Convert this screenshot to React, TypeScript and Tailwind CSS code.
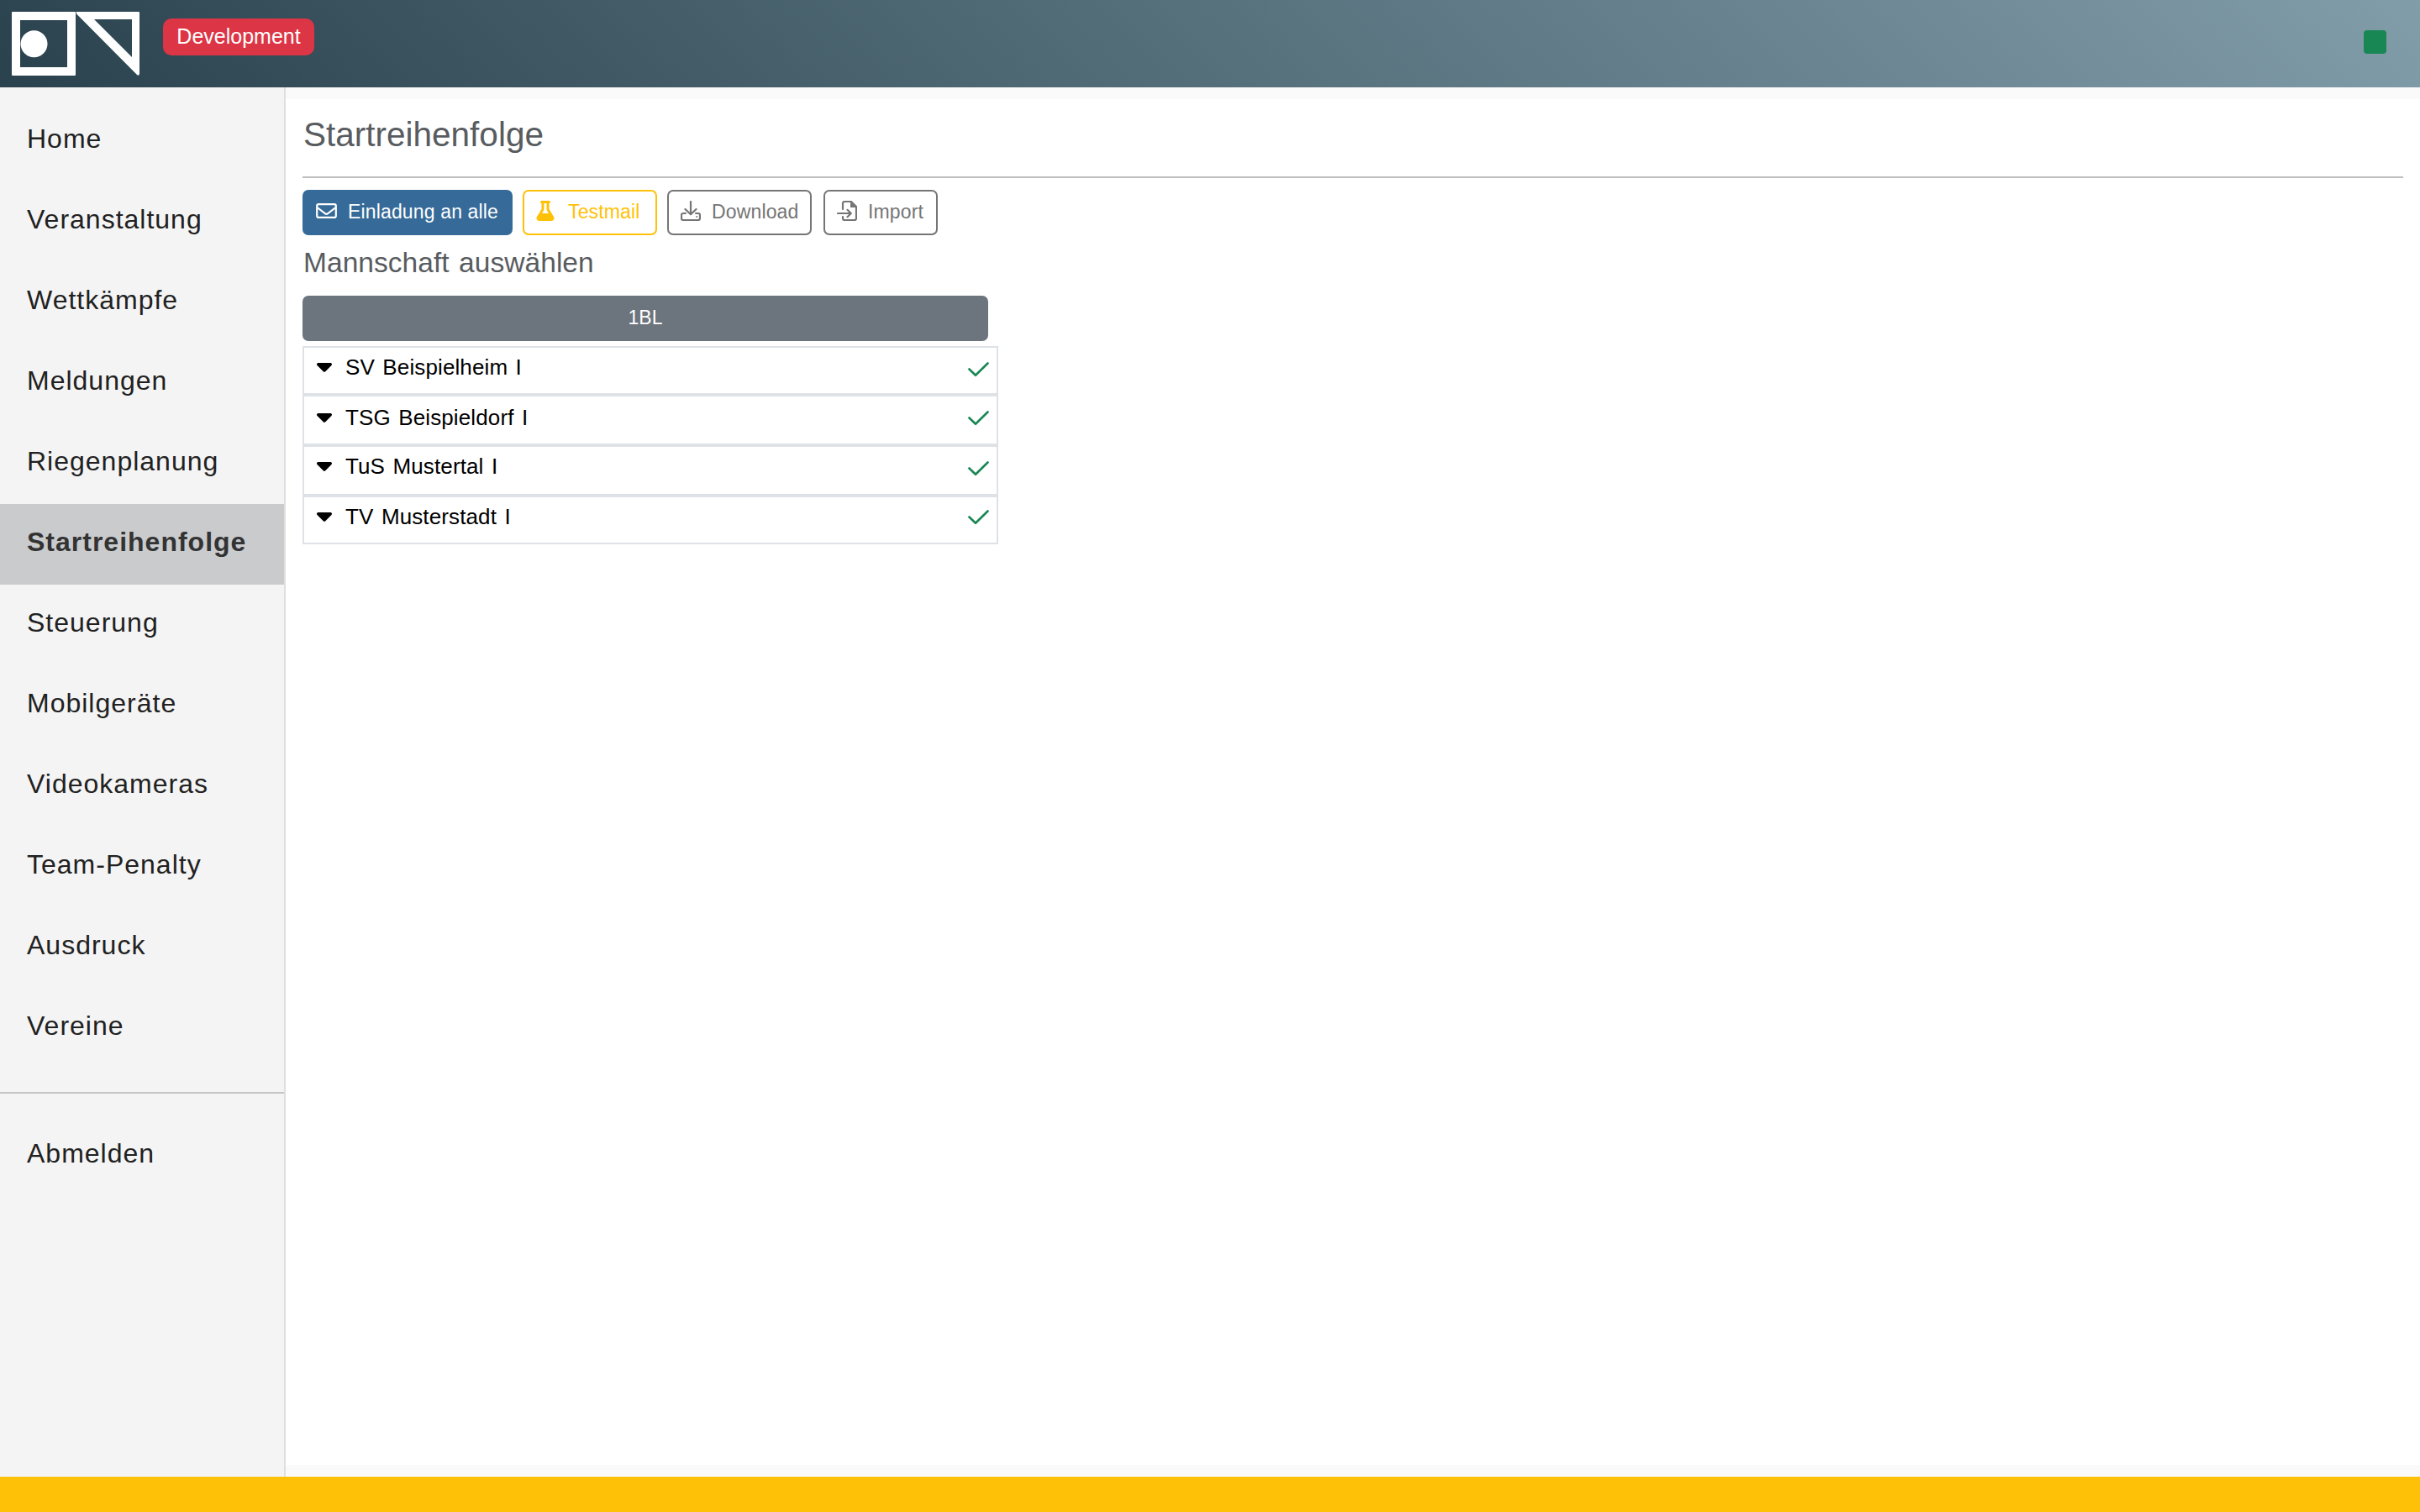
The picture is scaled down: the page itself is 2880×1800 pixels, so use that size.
import type { ReactNode } from "react";
import { FaCaretDown, FaFlask } from "react-icons/fa6";

const menuItems = [
  "Home",
  "Veranstaltung",
  "Wettkämpfe",
  "Meldungen",
  "Riegenplanung",
  "Startreihenfolge",
  "Steuerung",
  "Mobilgeräte",
  "Videokameras",
  "Team-Penalty",
  "Ausdruck",
  "Vereine",
];

const teams = [
  { name: "SV Beispielheim I", row: "h-[58px]", label: "pt-0", check: "pt-[5px]" },
  { name: "TSG Beispieldorf I", row: "h-[60px]", label: "pt-1", check: "pt-[5px]" },
  { name: "TuS Mustertal I", row: "h-[60px]", label: "pt-0", check: "pt-[5px]" },
  { name: "TV Musterstadt I", row: "h-[58px]", label: "pt-0", check: "pt-[3px]" },
];

function Logo() {
  return (
    <svg width="152" height="76" viewBox="0 0 152 76" fill="none" stroke="white">
      <path d="M1 0H75a1 1 0 0 1 1 1V75a1 1 0 0 1-1 1H1a1 1 0 0 1-1-1V1a1 1 0 0 1 1-1ZM10 10V66H66V10Z" fill="white" fillRule="evenodd" stroke="none" />
      <circle cx="26.5" cy="38.3" r="16" fill="white" stroke="none" />
      <path
        d="M77 0H151a1 1 0 0 1 1 1V74q-1 3-3 1L77.500 3Q76 1 77 0ZM98 9L143 54V9Z"
        fill="white"
        fillRule="evenodd"
        stroke="none"
      />
    </svg>
  );
}

function EnvelopeIcon() {
  return (
    <svg width="25" height="18" viewBox="0 0 25 18" fill="none" stroke="currentColor" strokeWidth="2.200" strokeLinejoin="round">
      <rect x="1.200" y="1.100" width="22.600" height="15.800" rx="2" />
      <path d="M1.500 5L10.800 12.200Q12.500 13.500 14.200 12.200L23.500 5" />
    </svg>
  );
}

function DownloadIcon() {
  return (
    <svg width="24" height="24" viewBox="0 0 24 24" fill="none" stroke="currentColor" strokeWidth="2.200" strokeLinecap="round" strokeLinejoin="round">
      <path d="M12 1V16M5.500 10L12 16.200L18.500 10" />
      <path d="M6 15H3a2 2 0 0 0-2 2V21a2 2 0 0 0 2 2H21a2 2 0 0 0 2-2V17a2 2 0 0 0-2-2H18" />
      <circle cx="19.200" cy="19" r="1" fill="currentColor" stroke="none" />
    </svg>
  );
}

function ImportIcon() {
  return (
    <svg width="24" height="24" viewBox="0 0 24 24" fill="none" stroke="currentColor" strokeWidth="2.200" strokeLinecap="round" strokeLinejoin="round">
      <path d="M7 10V3a2 2 0 0 1 2-2H17L23 7V21a2 2 0 0 1-2 2H9a2 2 0 0 1-2-2V19" />
      <path d="M16 1V8H23Z" fill="currentColor" stroke="none" />
      <path d="M1 15H16.500M12.500 10.800L16.800 15L12.500 19.200" />
    </svg>
  );
}

function CheckIcon() {
  return (
    <svg width="25" height="18" viewBox="0 0 25 18" fill="none" stroke="currentColor" strokeWidth="2.600" strokeLinecap="round" strokeLinejoin="round">
      <path d="M1.500 8.500L9 15.800L23.500 1.500" />
    </svg>
  );
}

function ToolbarButton({ className, icon, children }: { className: string; icon: ReactNode; children: ReactNode }) {
  return (
    <button className={`flex h-[54px] shrink-0 items-center rounded-[7px] border-2 pb-0.5 pl-[14px] text-[23px] tracking-[0.15px] ${className}`}>
      <span className="mr-[13px] mb-0.5">{icon}</span>
      <span className="whitespace-nowrap">{children}</span>
    </button>
  );
}

export default function App() {
  return (
    <div className="flex h-[1800px] w-[2880px] flex-col overflow-hidden bg-[#fafafa] font-['Liberation_Sans',sans-serif] [word-spacing:0.13em]">
      <header className="flex h-[104px] shrink-0 items-start bg-[linear-gradient(45deg,#2a424e,#819da9)]">
        <div className="pt-[14px] pl-[14px]">
          <Logo />
        </div>
        <span className="mt-[22px] ml-[28px] flex h-[44px] w-[180px] items-center justify-center rounded-[10px] bg-[#dc3545] pb-px text-[25px] text-white">
          Development
        </span>
        <span className="mt-[36px] mr-[40px] ml-auto h-[28px] w-[27px] rounded-[4px] bg-[#198754]" />
      </header>

      <div className="flex min-h-0 flex-1">
        <nav className="w-[340px] shrink-0 border-r-2 border-[#dfdfdf] bg-[#f4f4f4] pt-4 text-[32px] tracking-[1px] text-[#212121]">
          {menuItems.map((item) => (
            <div
              key={item}
              className={
                item === "Startreihenfolge"
                  ? "flex h-24 items-center bg-[#cacbcd] pb-1.5 pl-8 font-bold text-[#333]"
                  : "flex h-24 items-center pb-1.5 pl-8"
              }
            >
              {item}
            </div>
          ))}
          <hr className="mt-7 mb-6 border-t-2 border-[#c6c6c6]" />
          <div className="flex h-24 items-center pb-0.5 pl-8">Abmelden</div>
        </nav>

        <main className="my-[14px] flex-1 bg-white px-5">
          <h1 className="flex h-[92px] items-center pb-[8px] pl-px text-[40.500px] text-[#585c60]">
            Startreihenfolge
          </h1>
          <hr className="border-t-2 border-[#bdbdbd]" />

          <div className="mt-[14px] flex">
            <ToolbarButton className="w-[250px] border-[#366a98] bg-[#366a98] text-white" icon={<EnvelopeIcon />}>
              Einladung an alle
            </ToolbarButton>
            <ToolbarButton className="ml-3 w-[160px] border-[#ffc107] tracking-[0.5px] text-[#ffc107]" icon={<FaFlask className="-ml-px mr-0.5" size={24} />}>
              Testmail
            </ToolbarButton>
            <ToolbarButton className="ml-3 w-[172px] border-[#757575] text-[#757575]" icon={<DownloadIcon />}>
              Download
            </ToolbarButton>
            <ToolbarButton className="ml-[14px] w-[136px] border-[#757575] text-[#757575]" icon={<ImportIcon />}>
              Import
            </ToolbarButton>
          </div>

          <h2 className="flex h-[72px] items-center pb-[6px] pl-px text-[33.500px] tracking-[0.05px] text-[#585c60]">
            Mannschaft auswählen
          </h2>

          <div className="flex h-[54px] w-[816px] items-center justify-center rounded-[7px] bg-[#6c757d] pb-px text-[23px] text-white">
            1BL
          </div>
          <div className="mt-[6px] w-[828px]">
            {teams.map((team) => (
              <div key={team.name} className={`flex border-2 border-[#dee2e6] pl-[15px] text-black ${team.row}`}>
                <div className={`flex h-[46px] items-center text-[26px] tracking-[0.12px] ${team.label}`}>
                  <FaCaretDown size={29} className="mr-4 mb-1 w-[18px]" />
                  {team.name}
                </div>
                <div className={`mt-3 mr-[9px] ml-auto text-[#198754] ${team.check}`}>
                  <CheckIcon />
                </div>
              </div>
            ))}
          </div>
        </main>
      </div>

      <footer className="h-[42px] shrink-0 bg-[#ffc107]" />
    </div>
  );
}
